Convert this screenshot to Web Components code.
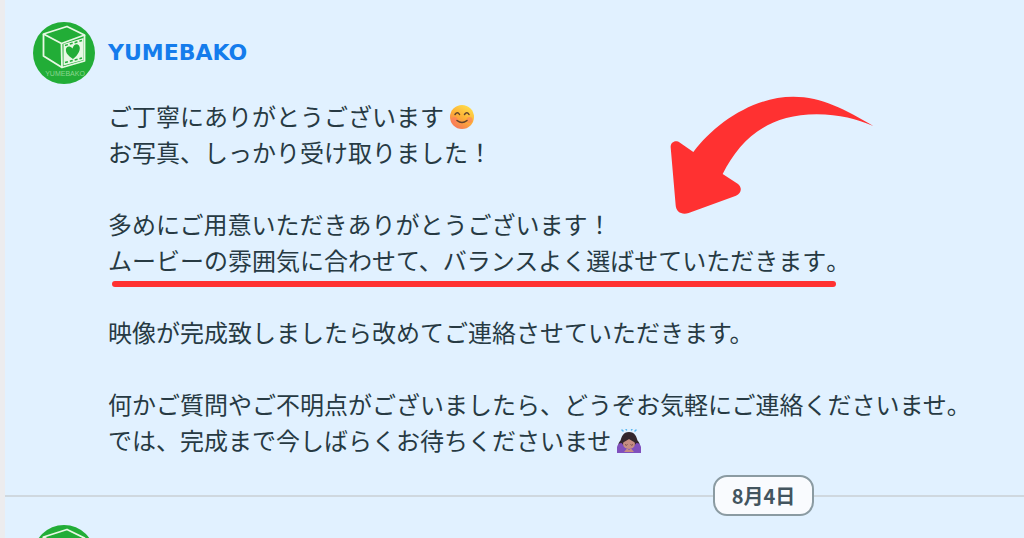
<!DOCTYPE html>
<html lang="ja">
<head>
<meta charset="utf-8">
<meta name="viewport" content="width=device-width, initial-scale=1">
<title>YUMEBAKO</title>
<style>
  body { margin: 0; background: #e1f1ff; font-family: "Noto Sans CJK JP", sans-serif; }
</style>
</head>
<body>
<chat-log>
  <chat-message>
    <a slot="name" href="#yumebako">YUMEBAKO</a>
    <chat-line>ご丁寧にありがとうございます<emoji-smile></emoji-smile></chat-line>
    <chat-line>お写真、しっかり受け取りました！</chat-line>
    <chat-line></chat-line>
    <chat-line>多めにご用意いただきありがとうございます！</chat-line>
    <chat-line><red-underline>ムービーの雰囲気に合わせて、バランスよく選ばせていただきます</red-underline>。</chat-line>
    <chat-line></chat-line>
    <chat-line>映像が完成致しましたら改めてご連絡させていただきます。</chat-line>
    <chat-line></chat-line>
    <chat-line>何かご質問やご不明点がございましたら、どうぞお気軽にご連絡くださいませ。</chat-line>
    <chat-line>では、完成まで今しばらくお待ちくださいませ<emoji-bow></emoji-bow></chat-line>
    <red-arrow slot="note"></red-arrow>
  </chat-message>
  <date-divider>8月4日</date-divider>
  <chat-message></chat-message>
</chat-log>

<script>
const define = (name, html) => {
  const template = document.createElement('template');
  template.innerHTML = html;
  customElements.define(name, class extends HTMLElement {
    constructor() {
      super();
      this.attachShadow({ mode: 'open' }).append(template.content.cloneNode(true));
    }
  });
};

define('chat-log', `
  <style>
    :host { display: block; box-sizing: border-box; height: 100vh; overflow: hidden;
      padding-top: 22px; border-left: 5px solid #ececee; background: #e1f1ff; }
  </style>
  <slot></slot>`);

define('brand-avatar', `
  <style>
    :host { display: block; width: 62px; height: 62px; }
    svg { display: block; width: 100%; height: 100%; }
    text { font: 7px "Liberation Sans", sans-serif; fill: #8bd68f; text-anchor: middle; }
  </style>
  <svg viewBox="0 0 62 62" role="img" aria-label="YUMEBAKO">
    <circle cx="31" cy="31" r="31" fill="#22ad37"/>
    <g fill="none" stroke="#e8f8e4" stroke-width="1.8" stroke-linejoin="round">
      <path d="M10.500 12 34 4.500 51.500 13 28.500 21.500Z"/>
      <path d="M10.500 12V34L29 45.500 51.500 39V13M28.500 21.500 29 45.500"/>
    </g>
    <path fill="#e8f8e4" d="M30.500 22 50.500 16V38L30.500 43.500Z"/>
    <path fill="#22ad37" d="M40 37C34 33 32.500 30 33 27 33.500 24 37 23.500 39.500 26.500 40.500 22.500 44 21 46 23.500 48.500 27 45 33.500 40 37Z"/>
    <path fill="none" stroke="#22ad37" stroke-width="1.500" stroke-dasharray="3 2" d="M32 23.500 49 18.500M32 40.500 49 36"/>
    <text x="32" y="54">YUMEBAKO</text>
  </svg>`);

define('chat-message', `
  <style>
    :host { display: grid; grid-template-columns: 62px minmax(0, 1fr); column-gap: 13px;
      position: relative; padding-left: 28px; }
    header { line-height: 62px; }
    ::slotted(a) { color: #147cec; text-decoration: none;
      font: bold 22px/62px "DejaVu Sans", sans-serif; }
    .body { grid-column: 2; margin-top: 14px; color: #273a43; font-size: 24px; line-height: 36px; }
  </style>
  <brand-avatar></brand-avatar>
  <header><slot name="name"></slot></header>
  <div class="body"><slot></slot></div>
  <slot name="note"></slot>`);

define('chat-line', `
  <style>:host { display: block; min-height: 36px; }</style>
  <slot></slot>`);

define('red-underline', `
  <style>
    :host { position: relative; }
    i { position: absolute; left: 4px; right: -10px; bottom: -10px; height: 6px;
      border-radius: 3px; background: #ff3131; }
  </style>
  <slot></slot><i></i>`);

define('red-arrow', `
  <style>
    :host { position: absolute; left: 665px; top: 74px; width: 204px; height: 119px; }
    svg { display: block; width: 100%; height: 100%; }
  </style>
  <svg viewBox="90 48 612 357" aria-hidden="true">
    <path fill="#ff3131" d="M700 138C620 90 545 50 460 50 340 50 225 130 160 216L120 188C107 178 91 186 92 202L107 376C108 396 126 406 146 399L288 347C304 341 308 322 293 311L248 282C300 180 380 104 530 103 600 103 650 118 700 138Z"/>
  </svg>`);

const emojiStyle = `
  <style>
    :host { display: inline-block; width: 24px; height: 24px; margin-left: 6px; vertical-align: -3px; }
    svg { display: block; width: 100%; height: 100%; }
  </style>`;

define('emoji-smile', `${emojiStyle}
  <svg viewBox="0 0 24 24" role="img" aria-label="笑顔">
    <defs><linearGradient id="g" x1=".8" y1="0" x2=".2" y2="1">
      <stop offset="0" stop-color="#ffe14d"/><stop offset=".5" stop-color="#fdb136"/><stop offset="1" stop-color="#f5705c"/>
    </linearGradient></defs>
    <circle cx="12" cy="12" r="12" fill="url(#g)"/>
    <circle cx="4.500" cy="15" r="3" fill="#ff7466" opacity=".5"/>
    <circle cx="19.500" cy="15" r="3" fill="#ff7466" opacity=".5"/>
    <g fill="none" stroke="#60412b" stroke-width="1.500" stroke-linecap="round">
      <path d="M5 9.500Q7.500 6 9.500 9.500M14.500 9.500Q17 6 19 9.500M7 15.500Q12 19.500 17 15.500"/>
    </g>
  </svg>`);

define('emoji-bow', `${emojiStyle}
  <svg viewBox="0 0 24 24" role="img" aria-label="お辞儀">
    <path fill="none" stroke="#5cb8f0" stroke-width="1.600" stroke-linecap="round" d="M6 2 5 1M9.500 1 9 0M14.500 1 15 0M18 2 19 1"/>
    <path fill="#33262d" d="M12 3C6 3 4.500 8 3.500 11.500 2 13.500 1 14.500 1.500 17H22.500C23 14.500 22 13.500 20.500 11.500 19.500 8 18 3 12 3Z"/>
    <path fill="#8050bd" d="M0 24V18Q1 14 4.500 14L9 19H15L19.500 14Q23 14 24 18V24Z"/>
    <ellipse cx="12" cy="15" rx="6" ry="5" fill="#c68d82"/>
    <path fill="#33262d" d="M5 14Q6 6 12 7 18 6 19 14 15 12 12 10 9 12 5 14Z"/>
    <path fill="none" stroke="#77504c" stroke-width="1" d="M8 15.500Q9.500 17 10.500 15.500M13.500 15.500Q14.500 17 16 15.500"/>
    <path fill="#c68d82" d="M7 23 10 19.500 12 21 14 19.500 17 23Z"/>
  </svg>`);

define('date-divider', `
  <style>
    :host { display: grid; grid-template-columns: 708px auto minmax(0, 1fr); align-items: center;
      margin: 17px 0 9px; }
    hr { width: 100%; margin: 0; border: 0; border-top: 2px solid #cfd8df; }
    time { box-sizing: border-box; width: 101px; border: 2px solid #8b9ba2; border-radius: 14px;
      background: #f9fbfe; color: #43555f; text-align: center; font-weight: bold;
      font-size: 20px; line-height: 37px; }
  </style>
  <hr><time datetime="08-04"><slot></slot></time><hr>`);
</script>
</body>
</html>
